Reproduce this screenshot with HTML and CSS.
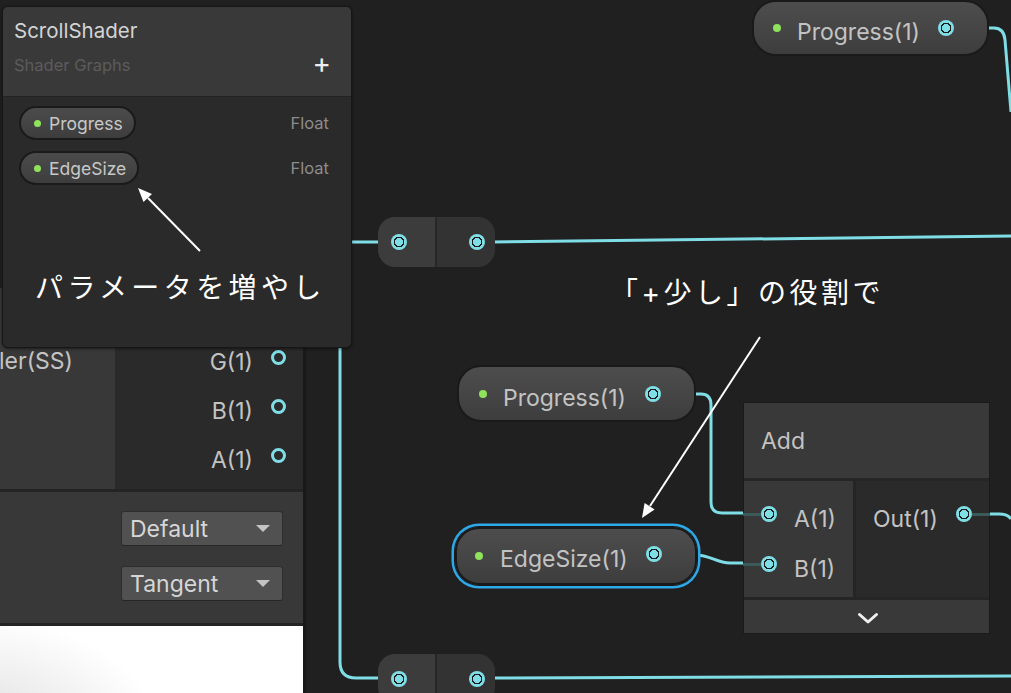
FILE: index.html
```html
<!DOCTYPE html>
<html lang="ja">
<head>
<meta charset="utf-8">
<title>ScrollShader</title>
<link rel="stylesheet" href="styles.css">
</head>
<body>
<div class="canvas">
  <svg class="wires" width="1011" height="693" viewBox="0 0 1011 693">
    <g fill="none" stroke="#7fdde6" stroke-width="3" stroke-linecap="butt">
      <path d="M985 28 H994 Q1004 28 1005 40 L1011 112"/>
      <path d="M330 242 H382"/>
      <path d="M492 242 L1011 236"/>
      <path d="M340 300 V662 Q340 678 356 678 H382"/>
      <path d="M492 678 L1011 676"/>
      <path d="M692 394 H701 Q711 394 711 405 V502 Q711 513 722 513 H746"/>
      <path d="M695 555 C711 555 716 563 730 563 H746"/>
      <path d="M987 514 H999 Q1008 514 1011 519"/>
    </g>
  </svg>

  <div class="master">
    <div class="m-ports">
      <div class="m-inputs"><div class="m-label">ler(SS)</div></div>
      <div class="m-outputs">
        <div class="m-row hidden-row"><span>R(1)</span><i class="hport"></i></div>
        <div class="m-row"><span>G(1)</span><i class="hport"></i></div>
        <div class="m-row"><span>B(1)</span><i class="hport"></i></div>
        <div class="m-row"><span>A(1)</span><i class="hport"></i></div>
      </div>
    </div>
    <div class="m-settings">
      <div class="dropdown"><span>Default</span><i class="tri"></i></div>
      <div class="dropdown"><span>Tangent</span><i class="tri"></i></div>
    </div>
    <div class="m-preview"></div>
  </div>

  <div class="pill-node pn-top"><i class="dot"></i><span class="pn-label">Progress(1)</span><i class="port"></i></div>

  <div class="reroute rr1"><div class="rr-half rr-in"><i class="port"></i></div><div class="rr-half rr-out"><i class="port"></i></div></div>
  <div class="reroute rr2"><div class="rr-half rr-in"><i class="port"></i></div><div class="rr-half rr-out"><i class="port"></i></div></div>

  <div class="pill-node pn-progress"><i class="dot"></i><span class="pn-label">Progress(1)</span><i class="port"></i></div>
  <div class="pill-node pn-edge selected"><i class="dot"></i><span class="pn-label">EdgeSize(1)</span><i class="port"></i></div>

  <div class="add-node">
    <div class="add-title">Add</div>
    <div class="add-body">
      <div class="add-in">
        <div class="add-row"><i class="port stub-l"></i><span>A(1)</span></div>
        <div class="add-row"><i class="port stub-l"></i><span>B(1)</span></div>
      </div>
      <div class="add-out">
        <div class="add-row out"><span>Out(1)</span><i class="port stub-r"></i></div>
      </div>
    </div>
    <div class="add-foot">
      <svg width="22" height="13" viewBox="0 0 22 13"><path d="M2.5 2.5 L11 10 L19.5 2.5" fill="none" stroke="#f0f0f0" stroke-width="3" stroke-linecap="round" stroke-linejoin="round"/></svg>
    </div>
  </div>

  <div class="blackboard">
    <div class="bb-head">
      <div class="bb-title">ScrollShader</div>
      <div class="bb-sub"><span>Shader Graphs</span><span class="bb-plus">+</span></div>
    </div>
    <div class="bb-body">
      <div class="bb-row"><div class="bb-pill"><i class="dot"></i><span>Progress</span></div><span class="bb-type">Float</span></div>
      <div class="bb-row"><div class="bb-pill"><i class="dot"></i><span>EdgeSize</span></div><span class="bb-type">Float</span></div>
    </div>
  </div>

  <svg class="arrows" width="1011" height="693" viewBox="0 0 1011 693">
    <g stroke="#ffffff" stroke-width="2" fill="#ffffff">
      <line x1="200" y1="251" x2="148" y2="198"/>
      <polygon points="138,188 152,194 143.5,202" stroke="none"/>
      <line x1="760" y1="337" x2="650" y2="506"/>
      <polygon points="642,518 654.6,509.6 644.6,503" stroke="none"/>
    </g>
  </svg>

  <div class="note note1">パラメータを増やし</div>
  <div class="note note2">「+少し」の役割で</div>
</div>
</body>
</html>
```

FILE: styles.css
```css
* { box-sizing: border-box; }
html, body { margin: 0; padding: 0; }
body {
  background: #202020;
  font-family: Inter, "Noto Sans", sans-serif;
  width: 1011px;
  height: 693px;
  overflow: hidden;
}
.canvas {
  position: relative;
  width: 1011px;
  height: 693px;
  overflow: hidden;
  background: #202020;
}
.wires, .arrows { position: absolute; left: 0; top: 0; }

/* ports */
.port {
  display: block;
  position: relative;
  width: 16px;
  height: 16px;
  border-radius: 50%;
  flex: none;
  background: radial-gradient(circle, #7fdde6 0 4px, #1c1c1c 4px 5.5px, #7fdde6 5.5px);
}
.hport {
  display: block;
  width: 15px;
  height: 15px;
  border-radius: 50%;
  border: 3px solid #7fdde6;
  flex: none;
  margin-bottom: 8px;
}
.dot {
  display: block;
  width: 8px;
  height: 8px;
  border-radius: 50%;
  background: #8ee25c;
  flex: none;
}

/* master node (partially visible) */
.master {
  position: absolute;
  left: 0;
  top: 288px;
  width: 306px;
  border-right: 3px solid #191919;
  color: #c3c3c3;
  font-size: 23px;
}
.m-ports {
  display: flex;
  height: 204px;
  border-bottom: 3px solid #242424;
}
.m-inputs {
  width: 115px;
  background: #383838;
  padding-top: 49px;
}
.m-label {
  height: 49px;
  line-height: 49px;
  margin-left: -1px;
}
.m-outputs {
  flex: 1;
  background: #2a2a2a;
  padding-right: 17px;
}
.m-row {
  height: 49px;
  display: flex;
  align-items: center;
  justify-content: flex-end;
  gap: 18px;
}
.hidden-row { visibility: hidden; }
.m-settings {
  height: 134px;
  background: #383838;
  border-bottom: 3px solid #242424;
  padding: 19px 20px 0 0;
  display: flex;
  flex-direction: column;
  align-items: flex-end;
  gap: 20px;
}
.dropdown {
  width: 162px;
  height: 35px;
  flex: none;
  background: #515151;
  border: 1px solid #2e2e2e;
  border-bottom-color: #262626;
  border-radius: 3px;
  display: flex;
  align-items: center;
  justify-content: space-between;
  padding: 0 12px 0 8px;
  color: #d6d6d6;
  font-size: 23px;
}
.tri {
  display: block;
  width: 0;
  height: 0;
  border-left: 7px solid transparent;
  border-right: 7px solid transparent;
  border-top: 7px solid #c4c4c4;
}
.m-preview {
  height: 80px;
  background: radial-gradient(ellipse 190px 120px at -30px 110px, #d9d9d9 0, #ececec 45%, #ffffff 100%);
  background-color: #fff;
}

/* pill property nodes */
.pill-node {
  position: absolute;
  display: flex;
  align-items: center;
  border: 2px solid #1a1a1a;
  border-radius: 24px;
  background: linear-gradient(180deg, #4d4d4d 0%, #444444 60%, #3d3d3d 100%);
  color: #c3c3c3;
  font-size: 23px;
  padding-right: 33px;
}
.pill-node .port { margin-left: auto; }
.pn-label { margin-left: 16px; padding-top: 8px; }
.pn-top { left: 752px; top: 0; width: 237px; height: 56px; padding-left: 19px; }
.pn-progress { left: 457px; top: 365px; width: 239px; height: 57px; padding-left: 20px; }
.pn-edge { left: 455px; top: 527px; width: 242px; height: 58px; padding-left: 18px; }
.pn-edge .pn-label { margin-left: 17px; padding-top: 6px; }
.pn-edge .port { margin-bottom: 4px; }
.selected { box-shadow: 0 0 0 1px #1a1a1a, 0 0 0 3.5px #2ea8e6; }

/* reroute nodes */
.reroute {
  position: absolute;
  left: 378px;
  width: 117px;
  height: 50px;
  border-radius: 17px;
  overflow: hidden;
  display: flex;
}
.rr1 { top: 217px; }
.rr2 { top: 654px; }
.rr-half {
  display: flex;
  align-items: center;
}
.rr-in {
  width: 59px;
  background: #3c3c3c;
  border-right: 2px solid #272727;
  padding-left: 13px;
}
.rr-out {
  flex: 1;
  background: #333333;
  justify-content: flex-end;
  padding-right: 10px;
}

/* add node */
.add-node {
  position: absolute;
  left: 744px;
  top: 403px;
  width: 245px;
  height: 230px;
  display: flex;
  flex-direction: column;
  color: #c3c3c3;
  font-size: 23px;
  box-shadow: 0 0 0 1px #1a1a1a;
}
.add-title {
  height: 78px;
  background: #393939;
  border-bottom: 3px solid #252525;
  padding: 24px 0 0 17px;
}
.add-body {
  display: flex;
  height: 119px;
  border-bottom: 3px solid #252525;
}
.add-in {
  width: 112px;
  background: #383838;
  border-right: 3px solid #252525;
  padding-top: 8px;
}
.add-out {
  flex: 1;
  background: #2a2a2a;
  padding-top: 8px;
}
.add-row {
  height: 50px;
  display: flex;
  align-items: center;
  gap: 17px;
  padding-left: 17px;
}
.add-row span { padding-top: 10px; }
.add-row.out {
  padding-left: 17px;
  gap: 18px;
}
.stub-l::before {
  content: "";
  position: absolute;
  right: 100%;
  top: 6.5px;
  width: 18px;
  height: 3px;
  background: #3d5a5b;
}
.stub-r::after {
  content: "";
  position: absolute;
  left: 100%;
  top: 6.5px;
  width: 18px;
  height: 3px;
  background: #3d5a5b;
}
.add-foot {
  flex: 1;
  background: #393939;
  display: flex;
  align-items: center;
  justify-content: center;
  padding: 3px 0 0 2px;
}
.add-foot svg { display: block; }

/* blackboard */
.blackboard {
  position: absolute;
  left: 2px;
  top: 6px;
  width: 350px;
  height: 342px;
  border: 1px solid #171717;
  border-radius: 6px;
  overflow: hidden;
  background: #2a2a2a;
  box-shadow: 0 1px 3px rgba(0,0,0,0.5);
}
.bb-head {
  height: 90px;
  background: #393939;
  border-bottom: 1px solid #232323;
  padding: 12px 20px 0 11px;
}
.bb-title {
  font-size: 20.5px;
  line-height: 24px;
  color: #d4d4d4;
}
.bb-sub {
  margin-top: 10px;
  display: flex;
  justify-content: space-between;
  align-items: center;
  font-size: 16.5px;
  line-height: 24px;
  color: #5c5c5c;
}
.bb-plus {
  color: #eeeeee;
  font-size: 28px;
  font-weight: 400;
  line-height: 24px;
  margin-top: -5px;
}
.bb-body {
  padding: 9px 22px 0 16px;
  display: flex;
  flex-direction: column;
  gap: 11px;
}
.bb-row {
  display: flex;
  align-items: center;
  justify-content: space-between;
}
.bb-pill {
  display: flex;
  align-items: center;
  gap: 8px;
  height: 34px;
  padding: 0 11px 0 13px;
  border: 2px solid #1a1a1a;
  border-radius: 17px;
  background: linear-gradient(180deg, #4b4b4b 0%, #434343 60%, #3d3d3d 100%);
  color: #c8c8c8;
  font-size: 17.5px;
}
.bb-pill .dot { width: 7px; height: 7px; }
.bb-type {
  color: #8c8c8c;
  font-size: 16.5px;
}

/* annotations */
.note {
  position: absolute;
  color: #ffffff;
  font-family: Inter, "Noto Sans CJK JP", sans-serif;
  font-size: 28px;
  letter-spacing: 4.4px;
  line-height: 36px;
  white-space: nowrap;
}
.note1 { left: 35px; top: 270px; }
.note2 { left: 610px; top: 275px; letter-spacing: 3.5px; }
```
